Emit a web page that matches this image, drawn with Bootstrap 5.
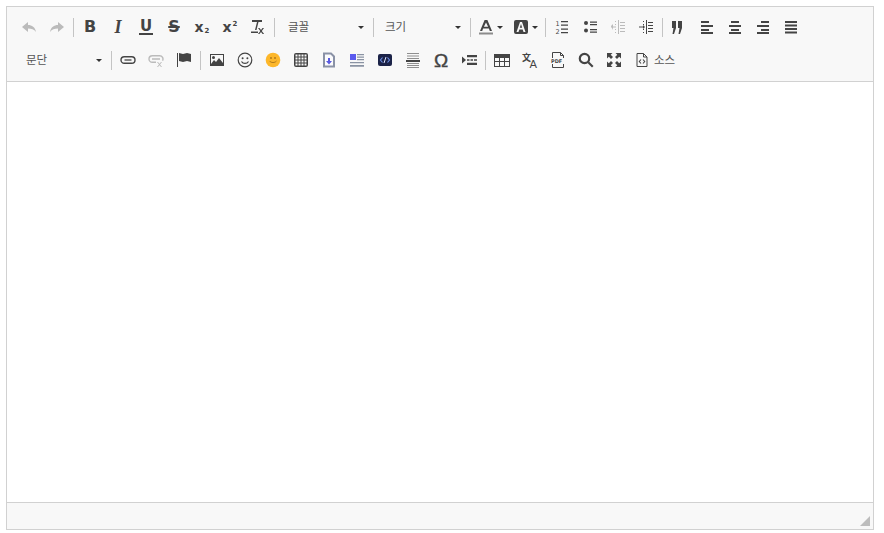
<!DOCTYPE html>
<html lang="ko">
<head>
<meta charset="UTF-8">
<title>편집기</title>
<link href="https://cdn.jsdelivr.net/npm/bootstrap@5.3.3/dist/css/bootstrap.min.css" rel="stylesheet">
<style>
body { background: #fff; font-family: "Noto Sans CJK KR", "Liberation Sans", sans-serif; color: #444; }
.ed-box { width: 868px; height: 524px; margin: 6px 0 0 6px; border: 1px solid #d1d1d1; }
.ed-tools { background: #f8f8f8; border-bottom: 1px solid #d1d1d1; padding: 6px 0 6px 8px; height: 75px; }
.ed-row { height: 28px; margin-bottom: 5px; }
.ed-btn { width: 28px; height: 28px; flex: none; color: #444; }
.ed-btn svg { width: 16px; height: 16px; display: block; fill: currentColor; }
.ed-off { color: #bbb; }
.ed-sep { width: 1px; height: 19px; background: #c4c4c4; margin: 0 2px; flex: none; }
.ed-combo { height: 28px; flex: none; font-size: 11.5px; padding-left: 11px; padding-right: 7px; color: #555; }
.ed-combo1 { width: 94px; }
.ed-combo2 { width: 92px; padding-left: 9px; }
.ed-combo3 { width: 94px; }
.ed-caret { width: 0; height: 0; border-left: 3px solid transparent; border-right: 3px solid transparent; border-top: 3px solid #333; flex: none; }
.ed-let { font: 700 16px/1 "DejaVu Sans", sans-serif; position: relative; }
.ed-it { font-style: italic; font-family: "Liberation Serif", serif; font-size: 18px; }
.ed-under { border-bottom: 2px solid #444; line-height: 13px; padding: 0 1px; font-size: 15px; }
.ed-strike { text-decoration: line-through; text-decoration-thickness: 2px; }
.ed-x { font-size: 14px; }
.ed-tiny { font: 700 7px/1 "DejaVu Sans", sans-serif; vertical-align: -1px; margin-left: 1px; }
.ed-sup { vertical-align: 6px; }
.ed-color { width: 35px; padding-left: 5px; gap: 3px; }
.ed-omega { font: 400 19px/1 "Liberation Sans", sans-serif; -webkit-text-stroke: .4px #444; }
.ed-src { font-size: 11.5px; color: #555; margin-left: -2px; }
.ed-body { background: #fff; }
.ed-foot { height: 27px; background: #f8f8f8; border-top: 1px solid #d1d1d1; padding: 0 3px 3px 0; }
.ed-grip { width: 10px; height: 10px; background: #bdbdbd; clip-path: polygon(100% 0, 100% 100%, 0 100%); }
svg text { font-family: "DejaVu Sans", sans-serif; }
</style>
</head>
<body>
<div class="ed-box d-flex flex-column">
  <div class="ed-tools">
    <div class="ed-row d-flex align-items-center">
      <div class="ed-btn ed-off d-flex align-items-center justify-content-center"><svg viewBox="0 0 16 16"><path d="M1 8 7 3v3c4 0 7 2 8 7-2-3-4.500-3.500-8-3.500V13z"/></svg></div>
      <div class="ed-btn ed-off d-flex align-items-center justify-content-center"><svg viewBox="0 0 16 16"><path d="M15 8 9 3v3c-4 0-7 2-8 7 2-3 4.500-3.500 8-3.500V13z"/></svg></div>
      <div class="ed-sep"></div>
      <div class="ed-btn d-flex align-items-center justify-content-center"><span class="ed-let">B</span></div>
      <div class="ed-btn d-flex align-items-center justify-content-center"><span class="ed-let ed-it">I</span></div>
      <div class="ed-btn d-flex align-items-center justify-content-center"><span class="ed-let ed-under">U</span></div>
      <div class="ed-btn d-flex align-items-center justify-content-center"><span class="ed-let ed-strike">S</span></div>
      <div class="ed-btn d-flex align-items-center justify-content-center"><span class="ed-let ed-x">x<span class="ed-tiny">2</span></span></div>
      <div class="ed-btn d-flex align-items-center justify-content-center"><span class="ed-let ed-x">x<span class="ed-tiny ed-sup">2</span></span></div>
      <div class="ed-btn d-flex align-items-center justify-content-center"><svg viewBox="0 0 16 16"><path d="M2 1h10v2H8.500l-2 8H5l2-8H2zM1 12.500h7v1.500H1z"/><path d="m9.500 9 1.500 2 1.500-2h1.500l-2.200 3 2.300 3h-1.500L11 13l-1.600 2H8l2.300-3L8 9z"/></svg></div>
      <div class="ed-sep"></div>
      <div class="ed-combo ed-combo1 d-flex align-items-center justify-content-between"><span>글꼴</span><span class="ed-caret"></span></div>
      <div class="ed-sep"></div>
      <div class="ed-combo ed-combo2 d-flex align-items-center justify-content-between"><span>크기</span><span class="ed-caret"></span></div>
      <div class="ed-sep"></div>
      <div class="ed-btn ed-color d-flex align-items-center"><svg viewBox="0 0 16 16"><path d="M6.600 1h2.800L14 12h-2.200l-.9-2.500H5.100L4.200 12H2zM8 3.500 5.900 7.700h4.200z"/><path d="M1 13.500h14v2H1z" style="fill:#8c8c8c"/></svg><span class="ed-caret"></span></div>
      <div class="ed-btn ed-color d-flex align-items-center"><svg viewBox="0 0 16 16"><path fill-rule="evenodd" d="M3 1h10a2 2 0 0 1 2 2v10a2 2 0 0 1-2 2H3a2 2 0 0 1-2-2V3a2 2 0 0 1 2-2zm4 2L3.500 13h2l.8-2.500h3.400l.8 2.500h2L9 3zm1 2 1.200 3.700H6.800z"/></svg><span class="ed-caret"></span></div>
      <div class="ed-sep"></div>
      <div class="ed-btn d-flex align-items-center justify-content-center"><svg viewBox="0 0 16 16"><text x="1.500" y="7" font-size="6.500">1</text><text x="1.500" y="14.500" font-size="6.500">2</text><path d="M7 2h7v1.200H7zM7 5.500h7v1.200H7zM7 9.500h7v1.200H7zM7 13h7v1.200H7z"/></svg></div>
      <div class="ed-btn d-flex align-items-center justify-content-center"><svg viewBox="0 0 16 16"><circle cx="4" cy="4" r="2"/><circle cx="4" cy="11.500" r="2"/><path d="M8 2.500h7v1.300H8zM8 5h7v1.300H8zM8 10h7v1.300H8zM8 12.500h7v1.300H8z"/></svg></div>
      <div class="ed-btn ed-off d-flex align-items-center justify-content-center"><svg viewBox="0 0 16 16"><path d="M8 1h1v14H8zM10 3h5v1h-5zM10 6h5v1h-5zM10 9h5v1h-5zM10 12h5v1h-5zM5 2h1v1H5zM5 5h1v1H5zM5 10h1v1H5zM5 13h1v1H5zM1 7.500h5v1H1zM1 7l2-2v6z"/></svg></div>
      <div class="ed-btn d-flex align-items-center justify-content-center"><svg viewBox="0 0 16 16"><path d="M8 1h1v14H8zM10 3h5v1h-5zM10 6h5v1h-5zM10 9h5v1h-5zM10 12h5v1h-5zM5 2h1v1H5zM5 5h1v1H5zM5 10h1v1H5zM5 13h1v1H5zM1 7.500h4v1H1zM7 8 5 6v4z"/></svg></div>
      <div class="ed-sep"></div>
      <div class="ed-btn d-flex align-items-center justify-content-center"><svg viewBox="0 0 16 16"><path d="M1 2h4v7L3 15H1.500l1-6H1zM7 2h4v7l-2 6H7.500l1-6H7z"/></svg></div>
      <div class="ed-btn d-flex align-items-center justify-content-center"><svg viewBox="0 0 16 16"><path d="M2 2h8v2H2zM2 6h12v2H2zM2 10h8v2H2zM2 13h12v2H2z"/></svg></div>
      <div class="ed-btn d-flex align-items-center justify-content-center"><svg viewBox="0 0 16 16"><path d="M4 2h8v2H4zM2 6h12v2H2zM4 10h8v2H4zM2 13h12v2H2z"/></svg></div>
      <div class="ed-btn d-flex align-items-center justify-content-center"><svg viewBox="0 0 16 16"><path d="M6 2h8v2H6zM2 6h12v2H2zM6 10h8v2H6zM2 13h12v2H2z"/></svg></div>
      <div class="ed-btn d-flex align-items-center justify-content-center"><svg viewBox="0 0 16 16"><path d="M2 2h12v2H2zM2 5.500h12v2H2zM2 9h12v2H2zM2 12.500h12v2H2z"/></svg></div>
    </div>
    <div class="ed-row d-flex align-items-center">
      <div class="ed-combo ed-combo3 d-flex align-items-center justify-content-between"><span>문단</span><span class="ed-caret"></span></div>
      <div class="ed-sep"></div>
      <div class="ed-btn d-flex align-items-center justify-content-center"><svg viewBox="0 0 16 16"><rect x="1" y="4.700" width="14" height="6.600" rx="3.300" fill="none" stroke="currentColor" stroke-width="1.400"/><path fill="none" stroke="currentColor" stroke-width="1.300" d="M4.500 8h7"/></svg></div>
      <div class="ed-btn ed-off d-flex align-items-center justify-content-center"><svg viewBox="0 0 16 16"><path fill="none" stroke="currentColor" stroke-width="1.400" d="M8 10.300H4.300a3.300 3.300 0 0 1 0-6.600h7.400a3.300 3.300 0 0 1 2.800 5M4 7h8"/><path d="m9 10 1 0 1.500 1.700L13 10h1l-2 2.500 2 2.500h-1l-1.500-1.700L10 15H9l2-2.500z"/></svg></div>
      <div class="ed-btn d-flex align-items-center justify-content-center"><svg viewBox="0 0 16 16"><path d="M1 1h1v14H1zM3 1l4 1 4-1 4 1v8l-4-1-4 1-4-1z"/></svg></div>
      <div class="ed-sep"></div>
      <div class="ed-btn d-flex align-items-center justify-content-center"><svg viewBox="0 0 16 16"><path fill-rule="evenodd" d="M1 2h14v12H1zm1 1v9l3-4 2 2 3-4 4 5V3zm2.500 1a1.500 1.500 0 1 1 0 3 1.500 1.500 0 0 1 0-3z"/></svg></div>
      <div class="ed-btn d-flex align-items-center justify-content-center"><svg viewBox="0 0 16 16"><circle cx="8" cy="8" r="6.800" fill="none" stroke="currentColor" stroke-width="1.200"/><circle cx="5.600" cy="6.200" r="1"/><circle cx="10.400" cy="6.200" r="1"/><path fill="none" stroke="currentColor" stroke-width="1.200" d="M4.500 9.500c1.500 2.600 5.500 2.600 7 0"/></svg></div>
      <div class="ed-btn d-flex align-items-center justify-content-center"><svg viewBox="0 0 16 16"><circle cx="8" cy="8" r="7.300" style="fill:#fdb72a"/><circle cx="6" cy="6" r=".9" style="fill:#a8741a"/><circle cx="10" cy="6" r=".9" style="fill:#a8741a"/><path fill="none" stroke="#a8741a" stroke-width=".9" d="M4.500 9c1.500 2 5.500 2 7 0"/></svg></div>
      <div class="ed-btn d-flex align-items-center justify-content-center"><svg viewBox="0 0 16 16"><path fill-rule="evenodd" d="M3 1h10a2 2 0 0 1 2 2v10a2 2 0 0 1-2 2H3a2 2 0 0 1-2-2V3a2 2 0 0 1 2-2zM4.500 2.500h-2v2h2zm1 0v2h2v-2zm3 0v2h2v-2zm3 0v2h2v-2zm-9 3v2h2v-2zm3 0v2h2v-2zm3 0v2h2v-2zm3 0v2h2v-2zm-9 3v2h2v-2zm3 0v2h2v-2zm3 0v2h2v-2zm3 0v2h2v-2zm-9 3v2h2v-2zm3 0v2h2v-2zm3 0v2h2v-2zm3 0v2h2v-2z"/></svg></div>
      <div class="ed-btn d-flex align-items-center justify-content-center"><svg viewBox="0 0 16 16"><path d="M3 1.500h7l3 3v10H3z" stroke="#8a92a6" stroke-width="2" style="fill:#fbfbfd"/><path d="M7 6h2v3h2l-3 3.500L5 9h2z" style="fill:#5a5ae0"/></svg></div>
      <div class="ed-btn d-flex align-items-center justify-content-center"><svg viewBox="0 0 16 16"><path d="M1 2h6v6H1z" style="fill:#5a5aee"/><path d="M8 2h7v1.300H8zM8 4.500h7v1.300H8zM8 7h7v1.300H8zM1 10h14v1.300H1zM1 13h14v1.700H1z" style="fill:#8a93a3"/></svg></div>
      <div class="ed-btn d-flex align-items-center justify-content-center"><svg viewBox="0 0 16 16"><rect x="1" y="2" width="14" height="12" rx="2" style="fill:#1c2348"/><path fill="none" stroke="#6d8fe8" stroke-width="1.100" d="M5.500 5.500 3.500 8l2 2.500M10.500 5.500l2 2.500-2 2.500"/><path fill="none" stroke="#dfe6ff" stroke-width="1" d="M9 5 7 11"/></svg></div>
      <div class="ed-btn d-flex align-items-center justify-content-center"><svg viewBox="0 0 16 16"><path d="M2 1h12v1H2zM2 3.500h12v1H2zM2 6h12v1H2zM2 11h12v1H2zM2 13h12v1H2zM2 15h12v1H2z" style="fill:#8f8f8f"/><path d="M1 8h14v2H1z"/></svg></div>
      <div class="ed-btn d-flex align-items-center justify-content-center"><span class="ed-omega">Ω</span></div>
      <div class="ed-btn d-flex align-items-center justify-content-center"><svg viewBox="0 0 16 16"><path d="M1 4.500 5 8l-4 3.500zM6 3h10v2.200H6zM6 7.300h2.500v1.400H6zM9.500 7.300H12v1.400H9.500zM13 7.300h3v1.400h-3zM6 10.800h10V13H6z"/></svg></div>
      <div class="ed-sep"></div>
      <div class="ed-btn d-flex align-items-center justify-content-center"><svg viewBox="0 0 16 16"><path fill-rule="evenodd" d="M0 2h16v13H0zm1 4v3h4V6zm5 0v3h4V6zm5 0v3h4V6zM1 10v4h4v-4zm5 0v4h4v-4zm5 0v4h4v-4z"/></svg></div>
      <div class="ed-btn d-flex align-items-center justify-content-center"><svg viewBox="0 0 16 16" overflow="visible"><text x="0" y="8.500" font-size="9" font-weight="700" style="font-family:'Noto Sans CJK SC',sans-serif">文</text><text x="7.500" y="16" font-size="11">A</text></svg></div>
      <div class="ed-btn d-flex align-items-center justify-content-center"><svg viewBox="0 0 16 16"><path fill="none" stroke="currentColor" d="M2.500 6V.5h8l3 3V6M2.500 12v3.500h11V12M10.500.5v3h3"/><text x="1" y="11" font-size="5" font-weight="700">PDF</text></svg></div>
      <div class="ed-btn d-flex align-items-center justify-content-center"><svg viewBox="0 0 16 16"><circle cx="6.500" cy="6.500" r="4.700" fill="none" stroke="currentColor" stroke-width="2.200"/><path d="m9.500 11 1.500-1.500 4.500 4.500-1.500 1.500z"/></svg></div>
      <div class="ed-btn d-flex align-items-center justify-content-center"><svg viewBox="0 0 16 16"><path d="M1 1h5.500L4.700 2.800 7 5 5 7 2.800 4.700 1 6.500zM15 1v5.500l-1.800-1.800L11 7 9 5l2.300-2.200L9.500 1zM1 15V9.500l1.800 1.800L5 9l2 2-2.300 2.200L6.500 15zM15 15H9.500l1.800-1.800L9 11l2-2 2.200 2.300L15 9.500z"/></svg></div>
      <div class="ed-btn d-flex align-items-center justify-content-center"><svg viewBox="0 0 16 16"><path fill="none" stroke="currentColor" d="M3 1.500h6.500l3.500 3.500v9.500H3zM9.500 1.500V5H13"/><path fill="none" stroke="currentColor" stroke-width="1.100" d="M7 7.500 5.300 9.500 7 11.500M9 7.500l1.700 2-1.700 2"/></svg></div>
      <span class="ed-src">소스</span>
    </div>
  </div>
  <div class="ed-body flex-grow-1"></div>
  <div class="ed-foot d-flex align-items-end justify-content-end"><div class="ed-grip"></div></div>
</div>
<script src="https://cdn.jsdelivr.net/npm/bootstrap@5.3.3/dist/js/bootstrap.bundle.min.js"></script>
</body>
</html>
